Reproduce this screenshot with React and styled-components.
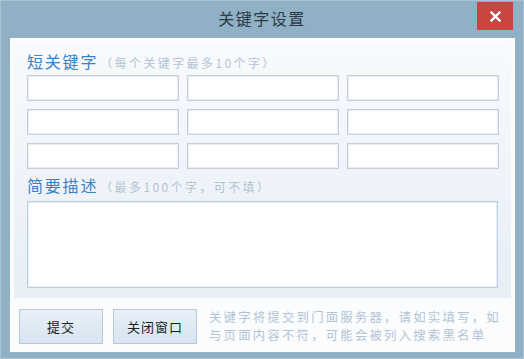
import React from "react";
import styled, { createGlobalStyle } from "styled-components";

const Global = createGlobalStyle`
  html, body { margin: 0; padding: 0; background: #8fb0c5; }
  body { font-family: "Noto Sans CJK SC", "Noto Sans", sans-serif; }
  * { box-sizing: border-box; }
`;

const Window = styled.div`
  width: 524px;
  height: 359px;
  background: #8fb0c5;
  border: 1px solid #a9c3d3;
  display: flex;
  flex-direction: column;
`;

const TitleBar = styled.div`
  height: 37px;
  flex: none;
  display: grid;
  grid-template-columns: 1fr auto 1fr;
  align-items: start;
`;

const Title = styled.div`
  grid-column: 2;
  margin-top: 5px;
  font-size: 16px;
  line-height: 24px;
  letter-spacing: 1.5px;
  color: #2c3a45;
`;

const CloseButton = styled.button`
  grid-column: 3;
  justify-self: end;
  margin: 1px 10px 0 0;
  width: 36px;
  height: 28px;
  border: none;
  padding: 0;
  background: #c8463f;
  display: flex;
  align-items: center;
  justify-content: center;
`;

const Content = styled.div`
  flex: 1;
  margin: 0 8px 6px 9px;
  background: #fbfcfe;
  display: flex;
  flex-direction: column;
`;

const Panel = styled.div`
  margin: 4px 4px 0 4px;
  padding: 6px 13px 10px 13px;
  background: linear-gradient(#f8fafd, #e7eef6);
  display: flex;
  flex-direction: column;
`;

const LabelRow = styled.div`
  display: flex;
  align-items: baseline;
  height: ${(p) => p.$h}px;
  line-height: ${(p) => p.$h}px;
`;

const Label = styled.span`
  font-size: 16px;
  letter-spacing: 1.8px;
  color: #3a80c4;
`;

const Hint = styled.span`
  margin-left: 2px;
  font-size: 12px;
  letter-spacing: 2.4px;
  color: #b3c3d2;
`;

const Grid = styled.div`
  display: grid;
  grid-template-columns: repeat(3, 152px);
  column-gap: 8px;
  row-gap: 8px;
`;

const Input = styled.input`
  height: 26px;
  width: 100%;
  border: 1px solid #c3d0dc;
  box-shadow: inset 0 0 0 1px #e6ecf2;
  background: #fff;
  outline: none;
`;

const TextArea = styled.textarea`
  height: 87px;
  width: 100%;
  border: 1px solid #bcd0e2;
  box-shadow: inset 0 0 0 1px #e8eef5;
  background: #fff;
  resize: none;
  outline: none;
`;

const Footer = styled.div`
  display: flex;
  align-items: center;
  padding: 10px 0 0 9px;
  gap: 10px;
`;

const Button = styled.button`
  width: 84px;
  height: 35px;
  border: 1px solid #b8c9d9;
  background: linear-gradient(#e8f0f8, #d7e4f0);
  font-family: "Noto Sans CJK SC", sans-serif;
  font-size: 13px;
  letter-spacing: 1px;
  color: #1e1e1e;
  padding: 0;
`;

const Note = styled.div`
  margin-left: 2px;
  display: flex;
  flex-direction: column;
`;

const NoteLine = styled.span`
  font-size: 12.4px;
  line-height: 18px;
  height: 18px;
  letter-spacing: 2.2px;
  color: #b2c4d4;
  white-space: nowrap;
`;

export default function App() {
  const cells = Array.from({ length: 9 });
  return (
    <>
      <Global />
      <Window>
        <TitleBar>
          <Title>关键字设置</Title>
          <CloseButton aria-label="关闭">
            <svg width="11" height="11" viewBox="0 0 11 11">
              <path d="M1.5 1.5 L9.5 9.5 M9.5 1.5 L1.5 9.5" stroke="#fff" strokeWidth="2.4" strokeLinecap="square" />
            </svg>
          </CloseButton>
        </TitleBar>
        <Content>
          <Panel>
            <LabelRow $h={27}>
              <Label>短关键字</Label>
              <Hint>（每个关键字最多10个字）</Hint>
            </LabelRow>
            <Grid>
              {cells.map((_, i) => (
                <Input key={i} />
              ))}
            </Grid>
            <LabelRow $h={32}>
              <Label>简要描述</Label>
              <Hint>（最多100个字，可不填）</Hint>
            </LabelRow>
            <TextArea />
          </Panel>
          <Footer>
            <Button>提交</Button>
            <Button>关闭窗口</Button>
            <Note>
              <NoteLine>关键字将提交到门面服务器，请如实填写，如</NoteLine>
              <NoteLine>与页面内容不符，可能会被列入搜索黑名单</NoteLine>
            </Note>
          </Footer>
        </Content>
      </Window>
    </>
  );
}
